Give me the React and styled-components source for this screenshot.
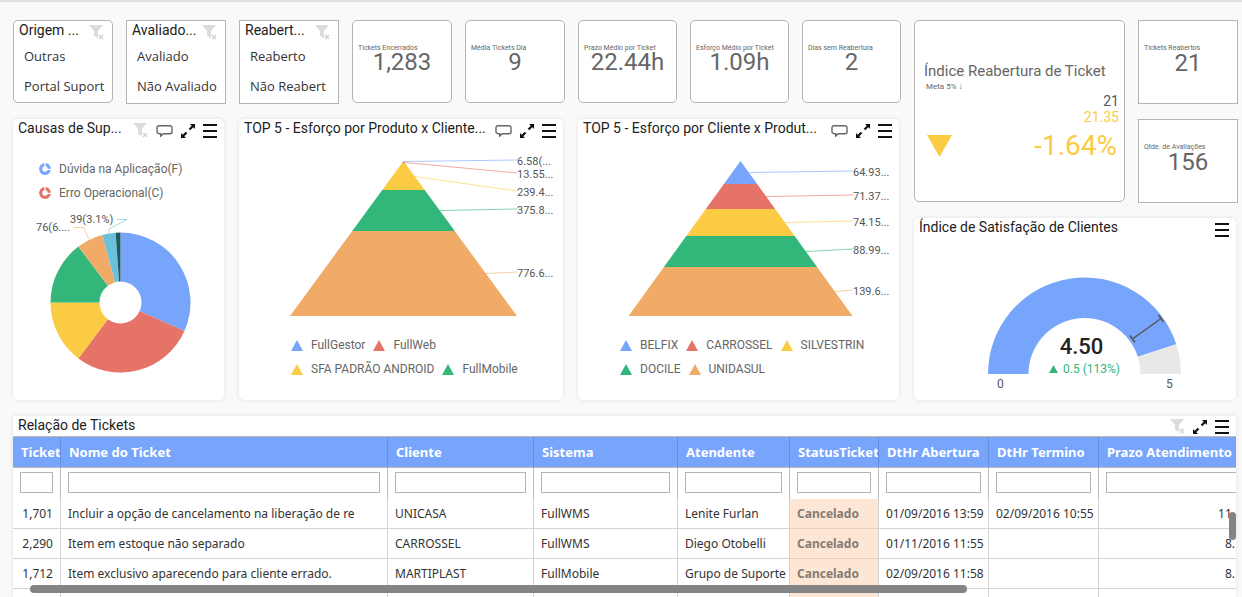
import React from "react";
import styled, {createGlobalStyle} from "styled-components"

const cores = {
    azul: '#77a5fc',
    vermelho: '#e67368',
    amarelo: '#fccb44',
    verde: '#33b679',
    laranja: '#f0ab69',
    ciano: '#6bc1db',
    petroleo: '#1d5a60',
}

const GlobalStyle = createGlobalStyle`
    * {
        box-sizing: border-box;
    }
    body {
        margin: 0;
        background-color: #f9f9f9;
        font-family: Roboto, "Liberation Sans", sans-serif;
        color: #212121;
    }
`

const Page = styled.main`
    display: flex;
    flex-direction: column;
    gap: 15px;
    height: 100vh;
    overflow: hidden;
    padding: 18px 4px 0 13px;
    border-top: 2px solid #e2e2e2;
`

const Grid = styled.div`
    display: grid;
    grid-template-columns: repeat(5, 100fr) repeat(5, 99fr) 100fr;
    grid-template-rows: repeat(2, minmax(84px, auto)) minmax(183px, auto);
    gap: 15px 13px;

    & > * {
        min-width: 0;
    }
`

//CARDS DO TOPO
const Card = styled.section`
    background-color: #fff;
    border: 1px solid #b4b4b4;
    border-radius: ${(p) => (p.$square ? '0' : '5px')};
    grid-column: span ${(p) => p.$cols || 1};
    grid-row: span ${(p) => p.$rows || 1};
    margin-bottom: ${(p) => (p.$square ? '0' : '1px')};
    overflow: hidden;
`

const FilterHead = styled.header`
    display: flex;
    justify-content: space-between;
    padding: 1px 8px 0 5px;
`

const Title = styled.h2`
    margin: 0;
    font-size: 14px;
    font-weight: 400;
    line-height: 16px;
    white-space: nowrap;
`

const FilterList = styled.ul`
    list-style: none;
    margin: 0;
    padding: 1px 0 0 10px;
`

const FilterItem = styled.button`
    display: block;
    padding: 0;
    border: none;
    background: none;
    height: 30px;
    font-family: "Open Sans", "Noto Sans", sans-serif;
    font-size: 13px;
    color: #333;
    white-space: nowrap;
    cursor: pointer;
`

const KpiLabel = styled.p`
    margin: 22px 0 0;
    padding-left: 5px;
    font-size: 7px;
    line-height: 10px;
    color: #666;
`

const KpiValue = styled.p`
    margin: 0;
    font-size: 24px;
    line-height: ${(p) => (p.$square ? '20px' : '18px')};
    text-align: center;
    color: #666;
`

//PAINEIS
const Panel = styled.section`
    display: flex;
    flex-direction: column;
    grid-column: span ${(p) => p.$cols || 1};
    grid-row: span ${(p) => p.$rows || 1};
    margin: 0 2px 1px 0;
    background-color: #fff;
    border-radius: 5px;
    box-shadow: 0 0 4px rgba(0, 0, 0, 0.1);
    overflow: hidden;
`

const PanelHead = styled.header`
    display: flex;
    justify-content: space-between;
    height: 20px;
    flex-shrink: 0;
    padding: 1px 7px 0 5px;
`

const Tools = styled.div`
    display: flex;
    gap: 8px;
    padding-top: ${(p) => (p.$low ? '3px' : '2px')};
`

const IconButton = styled.button`
    display: block;
    padding: 0;
    border: none;
    background: none;
    height: 15px;
    cursor: pointer;

    svg {
        display: block;
    }
`

const Chart = styled.svg`
    display: block;
    margin: 0 auto;
    font-size: 11px;
    fill: #555;
`

const Legend = styled.ul`
    display: flex;
    flex-wrap: wrap;
    gap: 0 8px;
    list-style: none;
    margin: 0;
    padding: ${(p) => p.$pad};
`

const LegendItem = styled.li`
    display: flex;
    align-items: center;
    gap: 8px;
    height: 24px;
    font-size: 12px;
    white-space: nowrap;
    color: #666;
`

//INDICE DE REABERTURA
const IndexBody = styled.div`
    display: flex;
    flex-direction: column;
    padding: 41px 5px 0 9px;
    color: #666;
`

const IndexTitle = styled.h2`
    margin: 0;
    font-size: 15px;
    font-weight: 400;
    line-height: 18px;
    white-space: nowrap;
`

const IndexMeta = styled.p`
    margin: 0;
    padding-left: 2px;
    font-size: 8px;
    line-height: 13px;
`

const IndexValue = styled.p`
    margin: 0;
    font-size: 14px;
    line-height: 16px;
    text-align: right;
    color: ${(p) => p.$color || '#555'};
`

const IndexResult = styled.div`
    display: flex;
    justify-content: space-between;
    align-items: center;
    padding: 4px 2px 0 3px;
    font-size: 28px;
    line-height: 33px;
    color: ${cores.amarelo};
`

//TABELA
const TablePanel = styled(Panel)`
    position: relative;
    flex: 1;
    min-height: 0;
    margin-bottom: 0;
    border-radius: 0;
`

const Table = styled.table`
    table-layout: fixed;
    width: 1240px;
    border-collapse: separate;
    border-spacing: 0;
    border-top: 1px solid #bbb;
    font-family: "Noto Sans", "Open Sans", sans-serif;
    font-size: 12px;
    color: #333;
`

const Th = styled.th`
    height: 31px;
    padding: 0 0 0 8px;
    overflow: hidden;
    text-align: left;
    font-size: 13px;
    font-weight: 700;
    white-space: nowrap;
    color: #fff;
    background-color: ${cores.azul};
    border-right: 1px solid #6690dd;
    border-bottom: 1px solid #bbb;
`

const FilterCell = styled.td`
    height: 31px;
    padding: 0 7px 2px;
    border-right: 1px solid #bbb;
`

const FilterInput = styled.input`
    display: block;
    width: 100%;
    height: 21px;
    border: 1px solid #b4b4b4;
    background-color: #fff;
`

const Td = styled.td`
    height: 30px;
    padding: 0 ${(p) => p.$right || 0}px 0 7px;
    overflow: hidden;
    white-space: nowrap;
    text-align: ${(p) => (p.$right ? 'right' : 'left')};
    font-weight: ${(p) => (p.$status ? 700 : 400)};
    color: ${(p) => (p.$status ? '#857c73' : 'inherit')};
    background-color: ${(p) => (p.$status ? '#fde6d3' : '#fff')};
    border-right: 1px solid #d4d4d4;
    border-bottom: 1px solid ${(p) => (p.$status ? '#e6d3c3' : '#d4d4d4')};
`

const ScrollX = styled.div`
    position: absolute;
    left: 17px;
    right: 22%;
    bottom: 4px;
    height: 8px;
    border-radius: 4px;
    background-color: #848484;
`

const ScrollY = styled.div`
    position: absolute;
    right: 0;
    top: 96px;
    width: 7px;
    height: 28px;
    border-radius: 4px;
    background-color: #848484;
`

//ICONES
function FilterIcon(){
    return(
        <IconButton type="button" aria-label="Limpar filtro">
            <svg width="15" height="15" viewBox="0 0 15 15">
                <path d="M0 0h14L9 6v7l-4-2V6z" fill="#dcdcdc"/>
                <path d="M9 9h6v6H9z" fill="#fff"/>
                <path d="M10 10l4 4M14 10l-4 4" stroke="#d4d4d4" strokeWidth="1.5"/>
            </svg>
        </IconButton>
    )
}

function CommentIcon(){
    return(
        <IconButton type="button" aria-label="Comentários">
            <svg width="17" height="15" viewBox="0 0 17 15">
                <path d="M3 2.700h11a2 2 0 0 1 2 2v4a2 2 0 0 1-2 2H7.500L4.700 13v-2.300H3a2 2 0 0 1-2-2v-4a2 2 0 0 1 2-2z" fill="none" stroke="#666" strokeWidth="1.400"/>
            </svg>
        </IconButton>
    )
}

function ExpandIcon(){
    return(
        <IconButton type="button" aria-label="Expandir">
            <svg width="14" height="14" viewBox="0 0 14 14">
                <path d="M9 0h5v5l-1.700-1.700-3 3-1.600-1.600 3-3zM5 14H0V9l1.700 1.700 3-3 1.600 1.600-3 3z" fill="#111"/>
            </svg>
        </IconButton>
    )
}

function MenuIcon(){
    return(
        <IconButton type="button" aria-label="Menu">
            <svg width="14" height="14" viewBox="0 0 14 14">
                <path d="M0 0h14v2H0zM0 6h14v2H0zM0 12h14v2H0z" fill="#111"/>
            </svg>
        </IconButton>
    )
}

function Triangle({color}){
    return(
        <svg width="12" height="11" viewBox="0 0 12 11">
            <path d="M6 0l6 11H0z" fill={color}/>
        </svg>
    )
}

function Ring({color}){
    return(
        <svg width="12" height="12" viewBox="0 0 12 12">
            <circle cx="6" cy="6" r="4.300" fill="none" stroke={color} strokeWidth="3.200"/>
            <path d="M6 4V0M8 6.300h4" stroke="#fff" strokeWidth="1.300"/>
        </svg>
    )
}

function FilterCard({title, items, square}){
    return(
        <Card $square={square}>
            <FilterHead>
                <Title>{title}</Title>
                <Tools $low><FilterIcon/></Tools>
            </FilterHead>
            <FilterList>
                {items.map((item) => (
                    <li key={item}><FilterItem type="button">{item}</FilterItem></li>
                ))}
            </FilterList>
        </Card>
    )
}

function Kpi({label, value, square}){
    return(
        <Card $square={square}>
            <KpiLabel>{label}</KpiLabel>
            <KpiValue $square={square}>{value}</KpiValue>
        </Card>
    )
}

//fatia da rosca, ângulos em graus a partir do topo
function arc(cx, cy, r, ri, a0, a1){
    const pt = (raio, a) => {
        const rad = (a - 90) * Math.PI / 180
        return `${cx + raio * Math.cos(rad)} ${cy + raio * Math.sin(rad)}`
    }
    const big = a1 - a0 > 180 ? 1 : 0
    return `M${pt(r, a0)}A${r} ${r} 0 ${big} 1 ${pt(r, a1)}L${pt(ri, a1)}A${ri} ${ri} 0 ${big} 0 ${pt(ri, a0)}Z`
}

const causas = [
    {color: cores.azul, from: 0, to: 114},
    {color: cores.vermelho, from: 114, to: 217},
    {color: cores.amarelo, from: 217, to: 270},
    {color: cores.verde, from: 270, to: 323},
    {color: cores.laranja, from: 323, to: 345},
    {color: cores.ciano, from: 345, to: 356},
    {color: cores.petroleo, from: 356, to: 360},
]

function Donut(){
    return(
        <Chart width="211" height="180" viewBox="0 0 211 180">
            {causas.map((c) => (
                <path key={c.color} d={arc(107.500, 97.500, 70, 21, c.from, c.to)} fill={c.color}/>
            ))}
            <path d="M61 22.500h10l5 12" fill="none" stroke={cores.laranja} strokeOpacity="0.600"/>
            <path d="M104 14.500h10L96 24v4" fill="none" stroke={cores.ciano} strokeOpacity="0.600"/>
            <text x="23" y="26">76(6....</text>
            <text x="57" y="18">39(3.1%)</text>
        </Chart>
    )
}

function Pyramid({width, cx, half, cuts, colors, labels, labelX}){
    const top = cuts[0]
    const base = cuts[cuts.length - 1]
    const edge = (y) => half * (y - top) / (base - top)

    return(
        <Chart width={width} height="190" viewBox={`0 0 ${width} 190`}>
            {colors.map((color, i) => {
                const y0 = cuts[i]
                const y1 = cuts[i + 1]
                const mid = (y0 + y1) / 2
                return(
                    <g key={color}>
                        <path d={`M${cx - edge(y0)} ${y0}H${cx + edge(y0)}L${cx + edge(y1)} ${y1}H${cx - edge(y1)}Z`} fill={color}/>
                        <path d={`M${cx + edge(mid)} ${mid}L${labelX} ${labels[i].y - 5}`} stroke={color} strokeOpacity="0.600"/>
                        <text x={labelX} y={labels[i].y}>{labels[i].text}</text>
                    </g>
                )
            })}
        </Chart>
    )
}

function Gauge(){
    return(
        <Chart width="321" height="160" viewBox="0 -6 321 160">
            <path d={arc(169.500, 130, 96.500, 56, -90, 72)} fill={cores.azul}/>
            <path d={arc(169.500, 130, 96.500, 56, 72, 90)} fill="#e8e8e8"/>
            <path d="M217.500 95L246 74.500M215 91.500l5 7M243.500 71l5 7" stroke="#555" strokeWidth="1.500"/>
            <text x="166.500" y="110" fontSize="22" fontWeight="500" textAnchor="middle" fill="#222">4.50</text>
            <path d="M134 129l4.500-8 4.500 8z" fill={cores.verde}/>
            <text x="148" y="129" fontSize="12" fill={cores.verde}>0.5 (113%)</text>
            <text x="82" y="144" fontSize="12">0</text>
            <text x="251" y="144" fontSize="12">5</text>
        </Chart>
    )
}

const colunas = [
    {nome: 'Ticket', width: 48},
    {nome: 'Nome do Ticket', width: 327},
    {nome: 'Cliente', width: 146},
    {nome: 'Sistema', width: 144},
    {nome: 'Atendente', width: 112},
    {nome: 'StatusTicket', width: 89},
    {nome: 'DtHr Abertura', width: 110},
    {nome: 'DtHr Termino', width: 110},
    {nome: 'Prazo Atendimento', width: 154},
]

//recuo à direita das colunas numéricas
const recuos = {0: 7, 8: 17}

const tickets = [
    ['1,701', 'Incluir a opção de cancelamento na liberação de re', 'UNICASA', 'FullWMS', 'Lenite Furlan', 'Cancelado', '01/09/2016 13:59', '02/09/2016 10:55', '11.'],
    ['2,290', 'Item em estoque não separado', 'CARROSSEL', 'FullWMS', 'Diego Otobelli', 'Cancelado', '01/11/2016 11:55', '', '8.'],
    ['1,712', 'Item exclusivo aparecendo para cliente errado.', 'MARTIPLAST', 'FullMobile', 'Grupo de Suporte', 'Cancelado', '02/09/2016 11:58', '', '8.'],
    ['', '', '', '', '', '', '', '', ''],
]

function TicketTable(){
    return(
        <Table>
            <colgroup>
                {colunas.map((c) => <col key={c.nome} width={c.width}/>)}
            </colgroup>
            <thead>
                <tr>
                    {colunas.map((c) => <Th key={c.nome} scope="col">{c.nome}</Th>)}
                </tr>
                <tr>
                    {colunas.map((c) => (
                        <FilterCell key={c.nome}><FilterInput type="text" aria-label={c.nome}/></FilterCell>
                    ))}
                </tr>
            </thead>
            <tbody>
                {tickets.map((linha, i) => (
                    <tr key={i}>
                        {linha.map((valor, j) => (
                            <Td key={j} $right={recuos[j]} $status={j === 5}>{valor}</Td>
                        ))}
                    </tr>
                ))}
            </tbody>
        </Table>
    )
}

function App(){
    return(
        <Page>
            <GlobalStyle/>
            <Grid>
                <FilterCard title="Origem ..." items={['Outras', 'Portal Suport']}/>
                <FilterCard square title="Avaliado..." items={['Avaliado', 'Não Avaliado']}/>
                <FilterCard square title="Reabert..." items={['Reaberto', 'Não Reabert']}/>
                <Kpi label="Tickets Encerrados" value="1,283"/>
                <Kpi label="Média Tickets Dia" value="9"/>
                <Kpi label="Prazo Médio por Ticket" value="22.44h"/>
                <Kpi label="Esforço Médio por Ticket" value="1.09h"/>
                <Kpi label="Dias sem Reabertura" value="2"/>
                <Card $cols={2} $rows={2}>
                    <IndexBody>
                        <IndexTitle>Índice Reabertura de Ticket</IndexTitle>
                        <IndexMeta>Meta 5% ↓</IndexMeta>
                        <IndexValue>21</IndexValue>
                        <IndexValue $color={cores.amarelo}>21.35</IndexValue>
                        <IndexResult>
                            <svg width="25" height="22" viewBox="0 0 25 22">
                                <path d="M0 0h25L12.500 22z" fill={cores.amarelo}/>
                            </svg>
                            <span>-1.64%</span>
                        </IndexResult>
                    </IndexBody>
                </Card>
                <Kpi square label="Tickets Reabertos" value="21"/>

                <Panel $cols={2} $rows={2}>
                    <PanelHead>
                        <Title>Causas de Sup...</Title>
                        <Tools $low><FilterIcon/><CommentIcon/><ExpandIcon/><MenuIcon/></Tools>
                    </PanelHead>
                    <Legend $pad="18px 26px 0 26px">
                        <LegendItem><Ring color={cores.azul}/>Dúvida na Aplicação(F)</LegendItem>
                        <LegendItem><Ring color={cores.vermelho}/>Erro Operacional(C)</LegendItem>
                    </Legend>
                    <Donut/>
                </Panel>

                <Panel $cols={3} $rows={2}>
                    <PanelHead>
                        <Title>TOP 5 - Esforço por Produto x Cliente...</Title>
                        <Tools $low><CommentIcon/><ExpandIcon/><MenuIcon/></Tools>
                    </PanelHead>
                    <Pyramid
                        width={324}
                        cx={164.5}
                        half={113.5}
                        labelX={278}
                        cuts={[22, 23, 24, 51, 92, 177]}
                        colors={[cores.azul, cores.vermelho, cores.amarelo, cores.verde, cores.laranja]}
                        labels={[
                            {text: '6.58(...', y: 26},
                            {text: '13.55...', y: 39},
                            {text: '239.4...', y: 57},
                            {text: '375.8...', y: 75},
                            {text: '776.6...', y: 138},
                        ]}
                    />
                    <Legend $pad="4px 40px 0 52px">
                        <LegendItem><Triangle color={cores.azul}/>FullGestor</LegendItem>
                        <LegendItem><Triangle color={cores.vermelho}/>FullWeb</LegendItem>
                        <LegendItem><Triangle color={cores.amarelo}/>SFA PADRÃO ANDROID</LegendItem>
                        <LegendItem><Triangle color={cores.verde}/>FullMobile</LegendItem>
                    </Legend>
                </Panel>

                <Panel $cols={3} $rows={2}>
                    <PanelHead>
                        <Title>TOP 5 - Esforço por Cliente x Produt...</Title>
                        <Tools $low><CommentIcon/><ExpandIcon/><MenuIcon/></Tools>
                    </PanelHead>
                    <Pyramid
                        width={321}
                        cx={162.5}
                        half={112}
                        labelX={275}
                        cuts={[22, 45, 70, 97, 128, 177]}
                        colors={[cores.azul, cores.vermelho, cores.amarelo, cores.verde, cores.laranja]}
                        labels={[
                            {text: '64.93...', y: 37},
                            {text: '71.37...', y: 61},
                            {text: '74.15...', y: 87},
                            {text: '88.99...', y: 115},
                            {text: '139.6...', y: 156},
                        ]}
                    />
                    <Legend $pad="4px 20px 0 42px">
                        <LegendItem><Triangle color={cores.azul}/>BELFIX</LegendItem>
                        <LegendItem><Triangle color={cores.vermelho}/>CARROSSEL</LegendItem>
                        <LegendItem><Triangle color={cores.amarelo}/>SILVESTRIN</LegendItem>
                        <LegendItem><Triangle color={cores.verde}/>DOCILE</LegendItem>
                        <LegendItem><Triangle color={cores.laranja}/>UNIDASUL</LegendItem>
                    </Legend>
                </Panel>

                <Kpi square label="Qtde. de Avaliações" value="156"/>

                <Panel $cols={3}>
                    <PanelHead>
                        <Title>Índice de Satisfação de Clientes</Title>
                        <Tools $low><MenuIcon/></Tools>
                    </PanelHead>
                    <Gauge/>
                </Panel>
            </Grid>

            <TablePanel>
                <PanelHead>
                    <Title>Relação de Tickets</Title>
                    <Tools><FilterIcon/><ExpandIcon/><MenuIcon/></Tools>
                </PanelHead>
                <TicketTable/>
                <ScrollX/>
                <ScrollY/>
            </TablePanel>
        </Page>
    );
}

export default App
